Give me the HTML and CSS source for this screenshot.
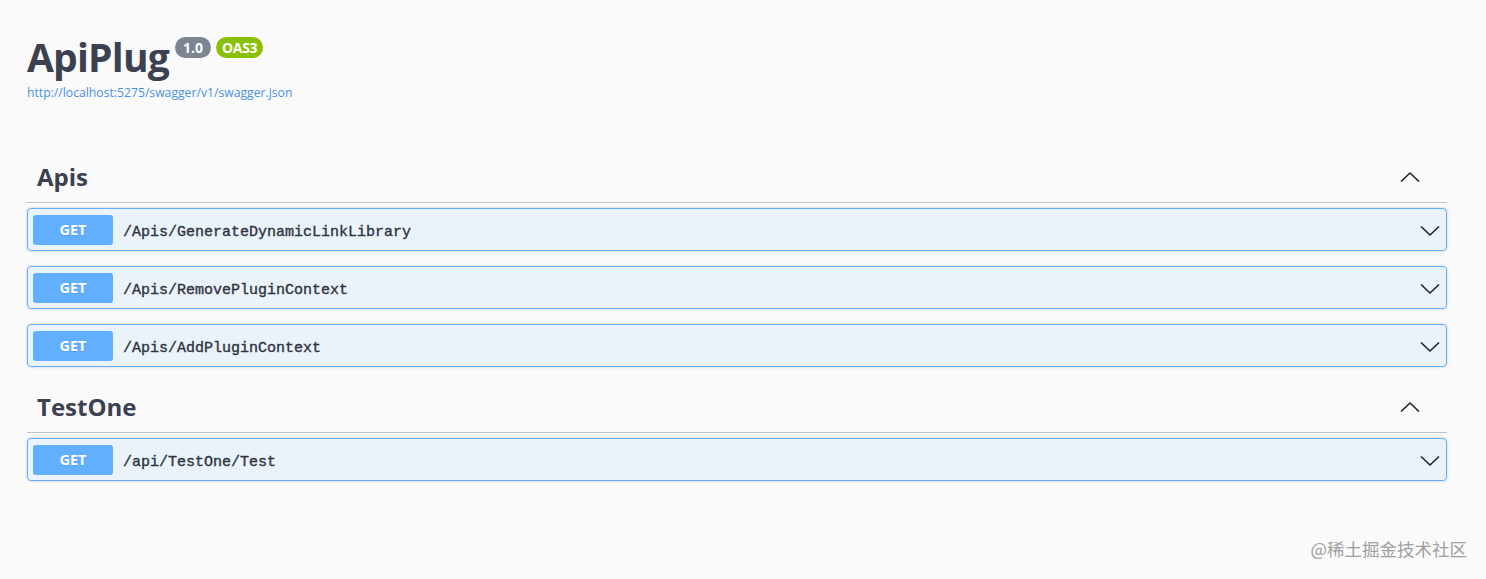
FILE: index.html
```html
<!DOCTYPE html>
<html>
<head>
<meta charset="utf-8">
<link rel="stylesheet" href="styles.css">
</head>
<body>
<div class="wrapper">
  <div class="info">
    <div class="title-row">
      <h2 class="title">ApiPlug</h2>
      <span class="badge version">1.0</span>
      <span class="badge oas">OAS3</span>
    </div>
    <a class="url" href="#">http://localhost:5275/swagger/v1/swagger.json</a>
  </div>

  <section class="tag-section">
    <div class="tag-header">
      <h3 class="tag-name">Apis</h3>
      <svg class="chev-up" width="20" height="12" viewBox="0 0 20 12"><path d="M1 10.5 L10 2 L19 10.5" fill="none" stroke="#222" stroke-width="1.6"/></svg>
    </div>
    <div class="op">
      <span class="method">GET</span>
      <span class="path">/Apis/GenerateDynamicLinkLibrary</span>
      <svg class="chev-down" width="20" height="12" viewBox="0 0 20 12"><path d="M1 1.5 L10 10 L19 1.5" fill="none" stroke="#222" stroke-width="1.6"/></svg>
    </div>
    <div class="op">
      <span class="method">GET</span>
      <span class="path">/Apis/RemovePluginContext</span>
      <svg class="chev-down" width="20" height="12" viewBox="0 0 20 12"><path d="M1 1.5 L10 10 L19 1.5" fill="none" stroke="#222" stroke-width="1.6"/></svg>
    </div>
    <div class="op">
      <span class="method">GET</span>
      <span class="path">/Apis/AddPluginContext</span>
      <svg class="chev-down" width="20" height="12" viewBox="0 0 20 12"><path d="M1 1.5 L10 10 L19 1.5" fill="none" stroke="#222" stroke-width="1.6"/></svg>
    </div>
  </section>

  <section class="tag-section">
    <div class="tag-header">
      <h3 class="tag-name">TestOne</h3>
      <svg class="chev-up" width="20" height="12" viewBox="0 0 20 12"><path d="M1 10.5 L10 2 L19 10.5" fill="none" stroke="#222" stroke-width="1.6"/></svg>
    </div>
    <div class="op">
      <span class="method">GET</span>
      <span class="path">/api/TestOne/Test</span>
      <svg class="chev-down" width="20" height="12" viewBox="0 0 20 12"><path d="M1 1.5 L10 10 L19 1.5" fill="none" stroke="#222" stroke-width="1.6"/></svg>
    </div>
  </section>
</div>
<div class="watermark">@稀土掘金技术社区</div>
</body>
</html>
```

FILE: styles.css
```css
html, body {
  margin: 0;
  padding: 0;
  background: #fafafa;
  height: 100%;
}
body {
  font-family: "Open Sans", "Noto Sans", sans-serif;
  color: #3b4151;
  position: relative;
  overflow: hidden;
}
.wrapper {
  width: 1420px;
  margin-left: 27px;
  padding-top: 34px;
}
.info {
  margin-bottom: 51px;
}
.title-row {
  display: flex;
  align-items: flex-start;
  height: 46px;
}
.title {
  margin: 0;
  font-size: 39px;
  font-weight: 700;
  line-height: 46px;
  letter-spacing: -0.8px;
  color: #3b4151;
}
.badge {
  display: inline-block;
  height: 21px;
  line-height: 21px;
  border-radius: 11px;
  color: #fff;
  font-size: 14px;
  font-weight: 700;
  margin-top: 3px;
}
.version {
  background: #7d8492;
  margin-left: 6px;
  padding: 0 8px;
}
.oas {
  background: #89bf04;
  margin-left: 5px;
  padding: 0 6px;
  letter-spacing: -0.3px;
}
.url {
  display: block;
  margin-top: 5px;
  font-size: 12.2px;
  line-height: 16px;
  color: #4990e2;
  text-decoration: none;
  font-family: "Open Sans", "Noto Sans", sans-serif;
}
.tag-section {
  margin-bottom: 9px;
}
.tag-header {
  display: flex;
  align-items: center;
  justify-content: space-between;
  height: 50px;
  border-bottom: 1px solid rgba(59, 65, 81, 0.3);
  padding: 0 27px 0 10px;
  margin-bottom: 5px;
}
.tag-name {
  margin: 0;
  margin-top: -2px;
  font-size: 24px;
  font-weight: 700;
  color: #3b4151;
}
.chev-up {
  display: block;
  margin-top: 0;
}
.op {
  display: flex;
  align-items: center;
  height: 41px;
  border: 1px solid #61affe;
  border-radius: 4px;
  background: rgba(97, 175, 254, 0.1);
  box-shadow: 0 0 3px rgba(0, 0, 0, 0.19);
  padding: 0 6px 0 5px;
  margin-bottom: 15px;
}
.method {
  width: 80px;
  height: 30px;
  line-height: 30px;
  text-align: center;
  background: #61affe;
  color: #fff;
  border-radius: 3px;
  font-size: 14.5px;
  font-weight: 700;
  margin-top: 1px;
  text-shadow: 0 1px 0 rgba(0, 0, 0, 0.1);
}
.path {
  flex: 1;
  margin-left: 10px;
  padding-top: 5px;
  font-family: "Liberation Mono", "DejaVu Sans Mono", monospace;
  font-size: 15px;
  color: #2e3340;
  -webkit-text-stroke: 0.35px #2e3340;
}
.chev-down {
  display: block;
  margin-top: 2px;
}
.watermark {
  position: absolute;
  right: 19px;
  bottom: 18px;
  font-family: "Noto Sans CJK SC", sans-serif;
  font-size: 17.5px;
  color: #a0a0a0;
}
```
